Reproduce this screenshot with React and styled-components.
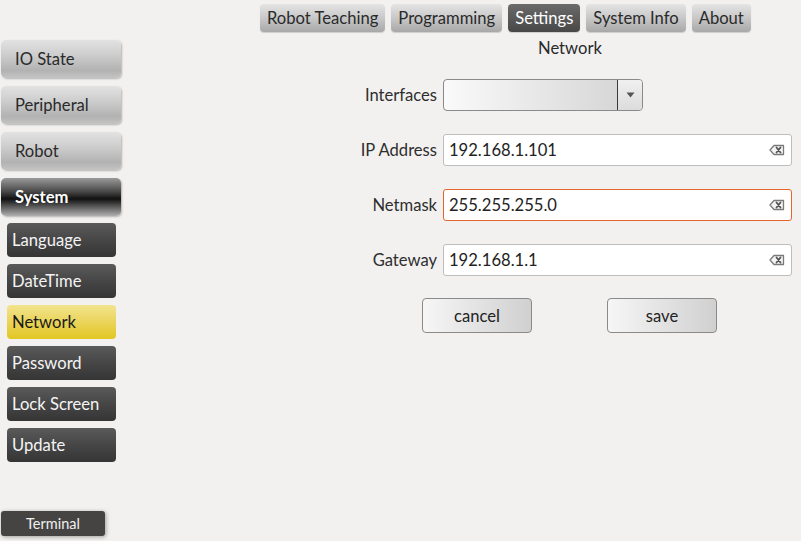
import React from "react";
import styled, { createGlobalStyle } from "styled-components";

const Global = createGlobalStyle`
  html, body { margin: 0; padding: 0; background: #f2f1f0; }
  body { font-family: "Lato", "Open Sans", sans-serif; color: #3c3c3c; }
  * { box-sizing: border-box; }
`;

const Page = styled.div`
  display: flex;
  width: 801px;
  height: 541px;
  overflow: hidden;
`;

const Sidebar = styled.div`
  width: 128px;
  display: flex;
  flex-direction: column;
  padding: 40px 0 5px 1px;
`;

const MainItem = styled.div`
  width: 120px;
  height: 38px;
  margin-bottom: 8px;
  border-radius: 5px;
  display: flex;
  align-items: center;
  padding-left: 14px;
  font-size: 16.6px;
  font-weight: ${p => (p.$active ? 700 : 400)};
  color: ${p => (p.$active ? "#ffffff" : "#2a2a2a")};
  background: ${p =>
    p.$active
      ? "linear-gradient(#9a9a9a 0%, #4a4a4a 35%, #111 55%, #6a6a6a 80%, #b0b0b0 100%)"
      : "linear-gradient(#e2e2e2 0%, #cdcdcd 40%, #b2b2b2 80%, #c4c4c4 100%)"};
  box-shadow: 1px 1px 2px rgba(0, 0, 0, 0.25);
`;

const SubList = styled.div`
  display: flex;
  flex-direction: column;
  gap: 7px;
  padding-left: 6px;
  margin-top: -1px;
`;

const SubItem = styled.div`
  width: 109px;
  height: 34px;
  border-radius: 4px;
  display: flex;
  align-items: center;
  padding-left: 5px;
  font-size: 16.6px;
  color: ${p => (p.$active ? "#1a1a1a" : "#f4f4f4")};
  background: ${p =>
    p.$active
      ? "linear-gradient(#f2e48e 0%, #ead45a 50%, #e2c622 100%)"
      : "linear-gradient(#5a5a5a 0%, #464646 50%, #353535 100%)"};
`;

const Terminal = styled.div`
  margin-top: auto;
  width: 104px;
  height: 25px;
  border-radius: 3px;
  background: #454443;
  color: #f0f0f0;
  font-size: 14.5px;
  display: flex;
  align-items: center;
  justify-content: center;
  box-shadow: 1px 1px 4px rgba(0, 0, 0, 0.35);
`;

const Main = styled.div`
  flex: 1;
  display: flex;
  flex-direction: column;
`;

const Tabs = styled.div`
  display: flex;
  gap: 6px;
  padding: 4px 0 0 132px;
`;

const Tab = styled.div`
  height: 28px;
  padding: 0 7px;
  border-radius: 4px;
  display: flex;
  align-items: center;
  font-size: 16.6px;
  color: ${p => (p.$active ? "#ffffff" : "#2a2a2a")};
  background: ${p =>
    p.$active
      ? "linear-gradient(#6a6a6a, #484848)"
      : "linear-gradient(#e4e4e4 0%, #c8c8c8 50%, #a8a8a8 100%)"};
  box-shadow: 0 1px 1px rgba(0, 0, 0, 0.15);
`;

const Title = styled.div`
  font-size: 16.6px;
  color: #2a2a2a;
  padding-left: 410px;
  margin-top: 6px;
  line-height: 20px;
`;

const Form = styled.div`
  display: grid;
  grid-template-columns: 95px 349px;
  column-gap: 6px;
  row-gap: 23px;
  align-items: center;
  margin: 21px 0 0 214px;
`;

const Label = styled.div`
  text-align: right;
  font-size: 16.6px;
  color: #2e2e2e;
`;

const Combo = styled.div`
  width: 200px;
  height: 32px;
  border: 1px solid #8a8a8a;
  border-radius: 4px;
  background: linear-gradient(90deg, #fafafa, #d2d2d2);
  display: flex;
  justify-content: flex-end;
  overflow: hidden;
`;

const ComboButton = styled.div`
  width: 25px;
  height: 100%;
  border-left: 1px solid #3a3a3a;
  background: linear-gradient(#f0f0f0, #dcdcdc);
  display: flex;
  align-items: center;
  justify-content: center;
`;

const Field = styled.div`
  height: 32px;
  border: 1px solid ${p => (p.$focus ? "#e6652c" : "#bdbdbd")};
  border-radius: 3px;
  background: #ffffff;
  display: flex;
  align-items: center;
  padding: 0 6px 0 5px;
  font-size: 16.6px;
  color: #222;
`;

const FieldText = styled.span`
  flex: 1;
`;

const Buttons = styled.div`
  display: flex;
  gap: 75px;
  margin: 22px 0 0 294px;
`;

const Button = styled.div`
  width: 110px;
  height: 35px;
  border: 1px solid #8a8a8a;
  border-radius: 4px;
  background: linear-gradient(90deg, #f6f6f6, #d0d0d0);
  display: flex;
  align-items: center;
  justify-content: center;
  font-size: 16.6px;
  color: #222;
`;

const ClearIcon = () => (
  <svg width="16" height="12" viewBox="0 0 16 12">
    <path d="M5 1.5 H14.5 V10.5 H5 L1 6 Z" fill="#f4f4f4" stroke="#7a7a7a" strokeWidth="1.3" strokeLinejoin="round" />
    <path d="M7.5 3.5 L11.5 8.5 M11.5 3.5 L7.5 8.5" stroke="#555" strokeWidth="1.8" strokeLinecap="round" />
  </svg>
);

const Arrow = () => (
  <svg width="9" height="6" viewBox="0 0 9 6">
    <path d="M0.5 0.5 H8.5 L4.5 5.5 Z" fill="#555" />
  </svg>
);

const fields = [
  { label: "IP Address", value: "192.168.1.101" },
  { label: "Netmask", value: "255.255.255.0", focus: true },
  { label: "Gateway", value: "192.168.1.1" },
];

export default function App() {
  return (
    <Page>
      <Global />
      <Sidebar>
        <MainItem>IO State</MainItem>
        <MainItem>Peripheral</MainItem>
        <MainItem>Robot</MainItem>
        <MainItem $active>System</MainItem>
        <SubList>
          {["Language", "DateTime", "Network", "Password", "Lock Screen", "Update"].map(s => (
            <SubItem key={s} $active={s === "Network"}>{s}</SubItem>
          ))}
        </SubList>
        <Terminal>Terminal</Terminal>
      </Sidebar>
      <Main>
        <Tabs>
          {["Robot Teaching", "Programming", "Settings", "System Info", "About"].map(t => (
            <Tab key={t} $active={t === "Settings"}>{t}</Tab>
          ))}
        </Tabs>
        <Title>Network</Title>
        <Form>
          <Label>Interfaces</Label>
          <Combo>
            <ComboButton><Arrow /></ComboButton>
          </Combo>
          {fields.map(f => (
            <React.Fragment key={f.label}>
              <Label>{f.label}</Label>
              <Field $focus={f.focus}>
                <FieldText>{f.value}</FieldText>
                <ClearIcon />
              </Field>
            </React.Fragment>
          ))}
        </Form>
        <Buttons>
          <Button>cancel</Button>
          <Button>save</Button>
        </Buttons>
      </Main>
    </Page>
  );
}
